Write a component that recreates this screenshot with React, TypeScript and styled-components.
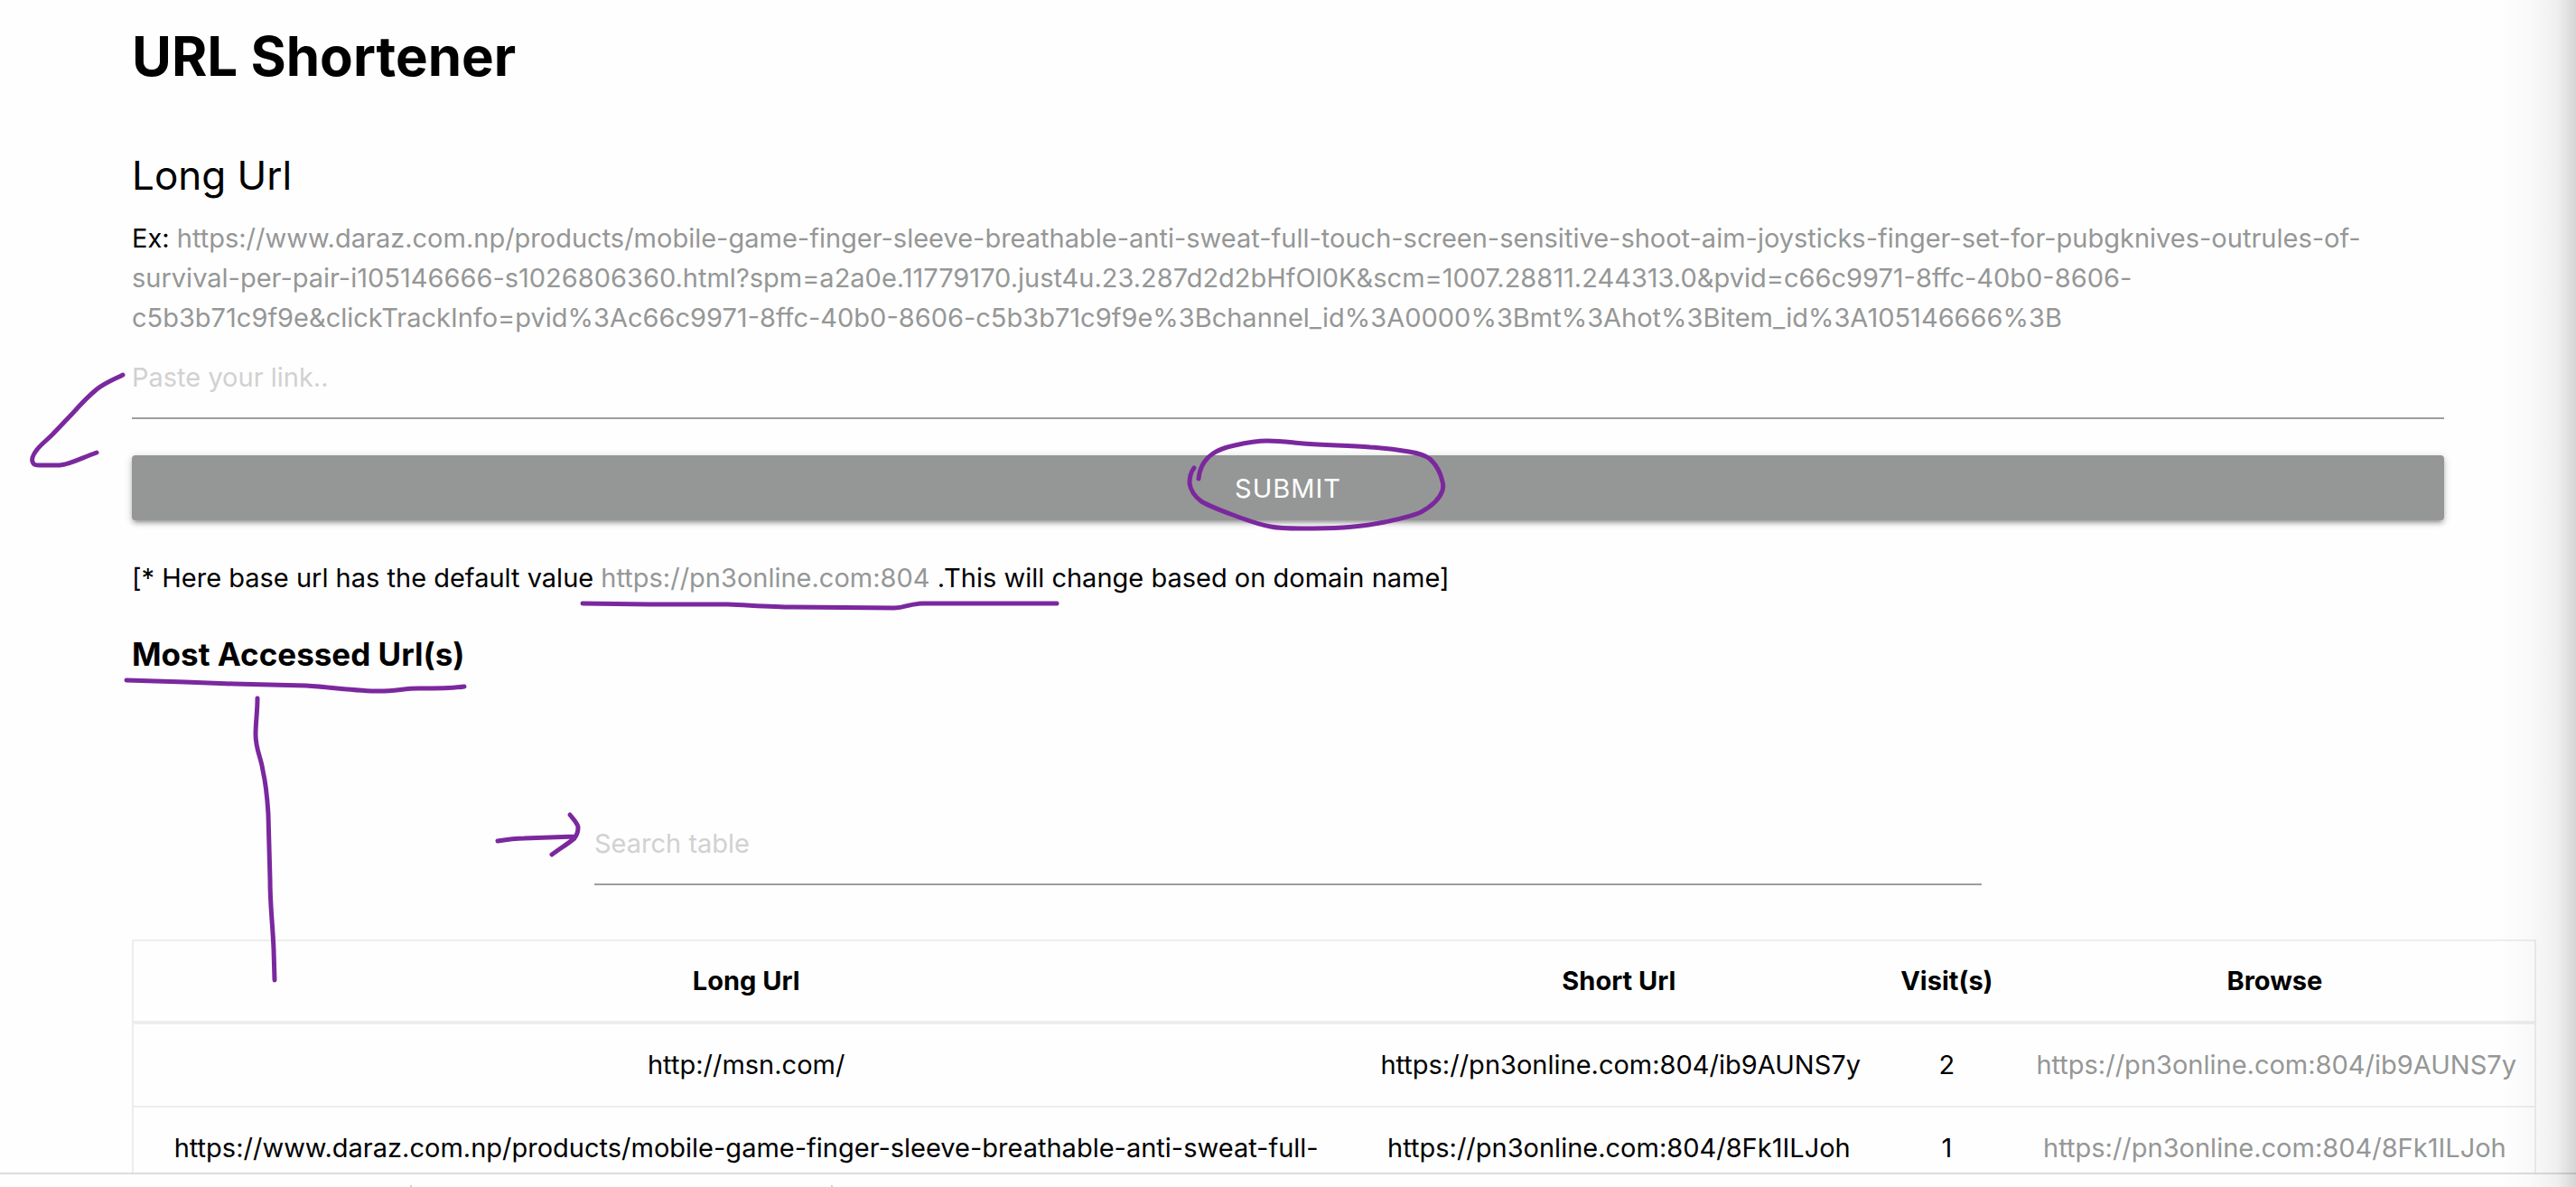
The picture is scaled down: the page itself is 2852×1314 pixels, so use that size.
import React from "react";
import styled, { createGlobalStyle } from "styled-components";

const GlobalStyle = createGlobalStyle`
  * { box-sizing: border-box; }
  html, body { margin: 0; }
  body {
    background: #fefefe;
    color: #000;
    font-family: Inter, "Liberation Sans", sans-serif;
    font-size: 29px;
    line-height: 44px;
  }
`;

const Page = styled.div`
  position: relative;
  display: flex;
  flex-direction: column;
  height: 100vh;
  overflow: hidden;
`;

const Viewport = styled.main`
  flex: 1;
  min-height: 0;
  overflow: hidden;
`;

const Container = styled.div`
  width: 90%;
  max-width: 2560px;
  margin: 0 auto;
  padding-top: 24px;
`;

const Title = styled.h1`
  margin: 0 0 60px;
  font-size: 60px;
  line-height: 76px;
  font-weight: 700;
`;

const FieldLabel = styled.label`
  display: block;
  font-size: 44px;
  line-height: 68px;
  margin-bottom: 14px;
`;

const Paragraph = styled.p`
  margin: 0;
`;

const Link = styled.a`
  color: #959796;
  text-decoration: none;
`;

const TextInput = styled.input`
  display: block;
  width: 100%;
  height: 90px;
  padding: 0 0 2px;
  border: 0;
  border-bottom: 2px solid #9e9e9e;
  background: transparent;
  font: inherit;
  outline: none;
  &::placeholder { color: #d1d1d1; opacity: 1; }
`;

const SubmitButton = styled.button`
  display: block;
  width: 100%;
  height: 72px;
  margin: 40px 0 42px;
  padding: 2px 0 0;
  border: 0;
  border-radius: 4px;
  background: #959796;
  color: #fff;
  font: inherit;
  letter-spacing: 1px;
  box-shadow: 0 4px 4px rgba(0, 0, 0, 0.14), 0 6px 2px -4px rgba(0, 0, 0, 0.12),
    0 2px 10px rgba(0, 0, 0, 0.2);
`;

const SectionTitle = styled.h2`
  margin: 36px 0 140px;
  font-size: 35px;
  line-height: 52px;
  font-weight: 700;
`;

const Search = styled.div`
  width: 60%;
  margin: 0 auto 60px;
`;

const UrlTable = styled.table`
  width: 104%;
  border-collapse: separate;
  border-spacing: 0;
  border: 2px solid #ededed;
  table-layout: fixed;
`;

const Column = styled.col<{ $share?: string }>`
  width: ${(p) => p.$share ?? "auto"};
`;

const HeadCell = styled.th`
  padding: 22px 20px;
  font-weight: 700;
  border-bottom: 4px solid #ededed;
`;

const Cell = styled.td`
  height: 92px;
  padding: 23px 24px;
  text-align: center;
  vertical-align: top;
  border-bottom: 2px solid #ededed;
`;

const BottomBar = styled.footer`
  flex: none;
  display: flex;
  height: 16px;
  padding-top: 12px;
  border-top: 2px solid #dcdcdc;
`;

const BarSegment = styled.div`
  flex: 0 0 16%;
  border-right: 2px solid #cfcfcf;
  & + & { flex-basis: 466px; }
`;

const EdgeShade = styled.div`
  position: absolute;
  inset: 0 0 0 auto;
  width: 84px;
  pointer-events: none;
  background: linear-gradient(
    to right,
    rgba(0, 0, 0, 0),
    rgba(0, 0, 0, 0.02) 40%,
    rgba(0, 0, 0, 0.06) 75%,
    rgba(0, 0, 0, 0.16)
  );
`;

const Ink = styled.svg`
  position: absolute;
  top: 0;
  left: 0;
  pointer-events: none;
  fill: none;
  stroke: #7b289e;
  stroke-width: 5px;
  stroke-linecap: round;
  stroke-linejoin: round;
`;

const EXAMPLE =
  "https://www.daraz.com.np/products/mobile-game-finger-sleeve-breathable-anti-sweat-full-touch-screen-sensitive-shoot-aim-joysticks-finger-set-for-pubgknives-outrules-of-survival-per-pair-i105146666-s1026806360.html?spm=a2a0e.11779170.just4u.23.287d2d2bHfOl0K&scm=1007.28811.244313.0&pvid=c66c9971-8ffc-40b0-8606-c5b3b71c9f9e&clickTrackInfo=pvid%3Ac66c9971-8ffc-40b0-8606-c5b3b71c9f9e%3Bchannel_id%3A0000%3Bmt%3Ahot%3Bitem_id%3A105146666%3B";

const ROWS = [
  { long: "http://msn.com/", short: "https://pn3online.com:804/ib9AUNS7y", visits: 2 },
  {
    long: "https://www.daraz.com.np/products/mobile-game-finger-sleeve-breathable-anti-sweat-full-",
    short: "https://pn3online.com:804/8Fk1ILJoh",
    visits: 1,
  },
];

export default function App() {
  return (
    <Page>
      <GlobalStyle />
      <Viewport>
        <Container>
          <Title>URL Shortener</Title>
          <FieldLabel htmlFor="long-url">Long Url</FieldLabel>
          <Paragraph>
            Ex: <Link href={EXAMPLE}>{EXAMPLE}</Link>
          </Paragraph>
          <TextInput id="long-url" type="text" placeholder="Paste your link.." />
          <SubmitButton type="submit">SUBMIT</SubmitButton>
          <Paragraph>
            [* Here base url has the default value{" "}
            <Link href="https://pn3online.com:804">https://pn3online.com:804</Link> .This will change
            based on domain name]
          </Paragraph>
          <SectionTitle>Most Accessed Url(s)</SectionTitle>
          <Search>
            <TextInput type="search" aria-label="Search table" placeholder="Search table" />
          </Search>
          <UrlTable>
            <colgroup>
              <Column />
              <Column $share="576px" />
              <Column $share="150px" />
              <Column $share="576px" />
            </colgroup>
            <thead>
              <tr>
                <HeadCell>Long Url</HeadCell>
                <HeadCell>Short Url</HeadCell>
                <HeadCell>Visit(s)</HeadCell>
                <HeadCell>Browse</HeadCell>
              </tr>
            </thead>
            <tbody>
              {ROWS.map((row) => (
                <tr key={row.short}>
                  <Cell>{row.long}</Cell>
                  <Cell>{row.short}</Cell>
                  <Cell>{row.visits}</Cell>
                  <Cell>
                    <Link href={row.short}>{row.short}</Link>
                  </Cell>
                </tr>
              ))}
            </tbody>
          </UrlTable>
        </Container>
      </Viewport>
      <BottomBar>
        <BarSegment />
        <BarSegment />
      </BottomBar>
      <EdgeShade />
      <Ink width="2852" height="1314" viewBox="0 0 2852 1314" aria-hidden="true">
        <path d="M136 415 C124 421 116 424 107 431 C95 441 88 449 80 458 L58 481 C50 489 44 493 40 499 C36 504 35 509 36 511 C37 515 40 515 44 515 L66 515 C78 514 90 507 107 501" />
        <path d="M1327 530 C1328 520 1331 510 1343 502 C1350 497 1358 495 1367 493 C1380 490 1390 488 1403 488 C1420 488 1430 490 1443 491 C1470 493 1495 493 1517 495 C1533 496 1548 498 1560 500 C1572 502 1578 504 1583 508 C1591 515 1595 524 1597 533 C1598 537 1598 540 1597 543 C1594 552 1584 561 1573 567 C1562 572 1547 575 1533 578 C1517 581 1503 583 1487 584 C1470 585 1455 585 1440 585 C1428 585 1417 585 1407 583 C1395 581 1384 577 1373 573 C1357 567 1342 562 1330 555 C1322 549 1318 542 1317 535 C1317 529 1318 523 1322 518" />
        <path d="M645 668 L719 669 L806 669 C830 670 855 672 878 672 L990 673 C1003 673 1006 668 1022 668 L1170 668" />
        <path d="M140 753 L205 755 L259 757 L339 759 C370 761 395 765 420 765 C438 765 448 762 464 762 C482 762 500 762 514 760" />
        <path d="M285 773 C285 788 283 800 283 813 C283 830 289 838 291 853 C295 870 296 885 297 901 L299 974 C299 1002 302 1025 303 1051 L304 1085" />
        <path d="M551 931 C563 929 570 928 580 928 L637 926 M631 902 C636 908 640 912 640 916 C640 921 639 924 636 928 C629 934 619 940 611 946" />
      </Ink>
    </Page>
  );
}
